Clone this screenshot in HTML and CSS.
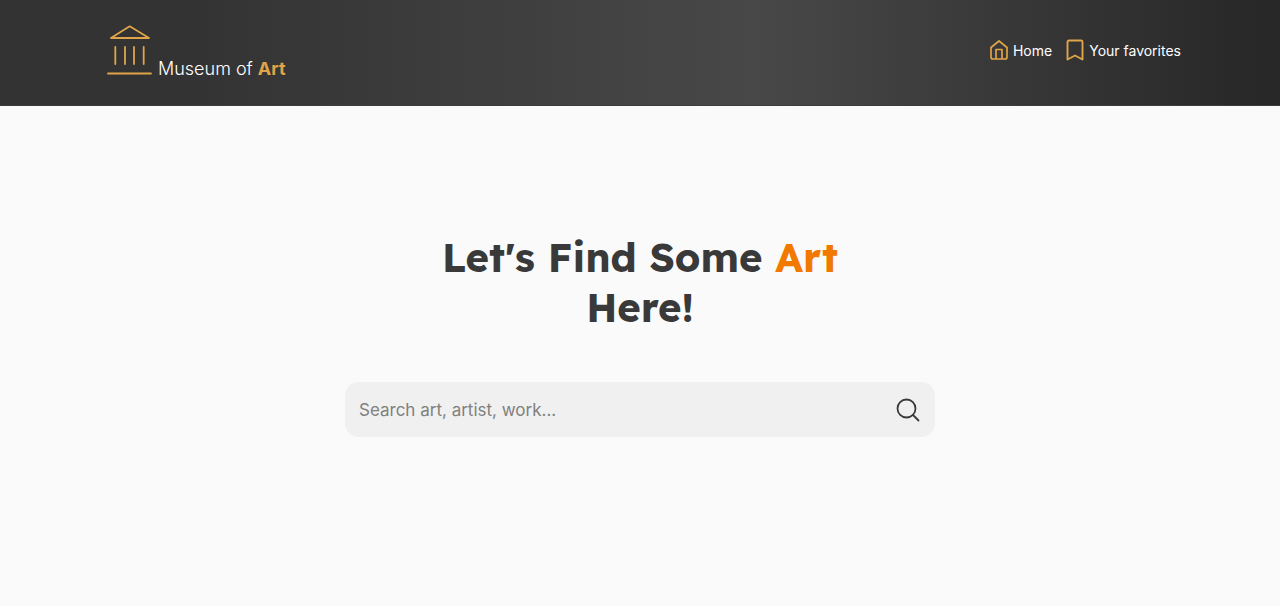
FILE: index.html
```html
<!DOCTYPE html>
<html lang="en">

<head>
    <meta charset="UTF-8">
    <meta name="viewport" content="width=device-width, initial-scale=1.0">
    <title>Museum of Art</title>
    <link rel="stylesheet" href="styles.css">
</head>

<body>
    <header class="header">
        <a class="logo" href="/">
            <svg class="logo-icon" viewBox="0 0 46 52" fill="none" stroke="currentColor" stroke-width="1.8" stroke-linejoin="round" stroke-linecap="round" aria-hidden="true">
                <path d="M4 14 22.700 2.300 42 14Z" />
                <path d="M8.300 23v17M18 23v17M27 23v17M36.700 23v17M1 49.500h43" />
            </svg>
            <span class="logo-text">Museum of <b>Art</b></span>
        </a>
        <nav class="nav">
            <a class="nav-link" href="/">
                <svg class="nav-icon home" viewBox="0 0 18 20" fill="none" stroke="currentColor" stroke-width="1.700" stroke-linejoin="round" aria-hidden="true">
                    <path d="M1 7.500 9 1l8 6.500V17a2 2 0 0 1-2 2H3a2 2 0 0 1-2-2Z" />
                    <path d="M6 19V9.500h6V19" />
                </svg>
                Home
            </a>
            <a class="nav-link" href="/favorites">
                <svg class="nav-icon bookmark" viewBox="0 0 18 22" fill="none" stroke="currentColor" stroke-width="1.900" stroke-linejoin="round" aria-hidden="true">
                    <path d="M1.500 3a1.500 1.500 0 0 1 1.500-1.500h12a1.500 1.500 0 0 1 1.500 1.500v17.500L9 16.500l-7.500 4Z" />
                </svg>
                Your favorites
            </a>
        </nav>
    </header>
    <main class="main">
        <h1 class="title">Let's Find Some <span>Art</span> Here!</h1>
        <form class="search" role="search">
            <input class="search-input" type="search" placeholder="Search art, artist, work..." aria-label="Search art, artist, work">
            <button class="search-button" type="submit" aria-label="Search">
                <svg class="search-icon" viewBox="0 0 24 24" fill="none" stroke="currentColor" stroke-width="1.800" stroke-linecap="round" aria-hidden="true">
                    <circle cx="10.500" cy="10.500" r="9" />
                    <path d="m17 17 5.500 5.500" />
                </svg>
            </button>
        </form>
    </main>
</body>

</html>
```
FILE: styles.css
```css
* {
    box-sizing: border-box;
}

body {
    margin: 0;
    font-family: Inter, "Liberation Sans", sans-serif;
    background-color: #fafafa;
    color: #393939;
}

a {
    color: inherit;
    text-decoration: none;
}

.header {
    display: flex;
    justify-content: space-between;
    align-items: center;
    padding: 24px 99px 29px 107px;
    background: linear-gradient(90deg, #343333 15%, #484848 59%, #282828 98%);
    border-bottom: 1px solid #3c3c3c;
}

.logo {
    display: flex;
    align-items: flex-end;
    gap: 5px;
    color: #e0a449;
}

.logo-icon {
    width: 46px;
    height: 52px;
}

.logo-text {
    font-size: 18px;
    font-weight: 300;
    line-height: 14px;
    color: #fff;
}

.logo-text b {
    font-weight: 700;
    color: #e0a449;
}

.nav {
    display: flex;
    gap: 14px;
}

.nav-link {
    display: flex;
    align-items: center;
    gap: 5px;
    font-size: 14px;
    color: #fff;
}

.nav-icon {
    width: 18px;
    color: #e0a449;
}

.home {
    height: 20px;
}

.bookmark {
    height: 22px;
}

.main {
    display: flex;
    flex-direction: column;
    align-items: center;
    padding: 126px 24px 64px;
}

.title {
    max-width: 480px;
    margin: 0 0 50px;
    font-family: "Lexend Deca", Lexend, Inter, sans-serif;
    font-size: 40px;
    line-height: 50px;
    font-weight: 700;
    text-align: center;
}

.title span {
    color: #f17900;
}

.search {
    display: flex;
    align-items: center;
    width: 100%;
    max-width: 590px;
    height: 55px;
    padding: 0 15px 0 14px;
    border-radius: 14px;
    background-color: #f0f0f0;
}

.search-input {
    flex: 1;
    min-width: 0;
    padding: 0;
    border: 0;
    outline: 0;
    background: none;
    font: 17px Inter, "Liberation Sans", sans-serif;
    color: #393939;
}

.search-input::placeholder {
    color: #808080;
}

.search-button {
    display: flex;
    padding: 0;
    border: 0;
    background: none;
    color: #393939;
    cursor: pointer;
}

.search-icon {
    width: 24px;
    height: 24px;
}
```
